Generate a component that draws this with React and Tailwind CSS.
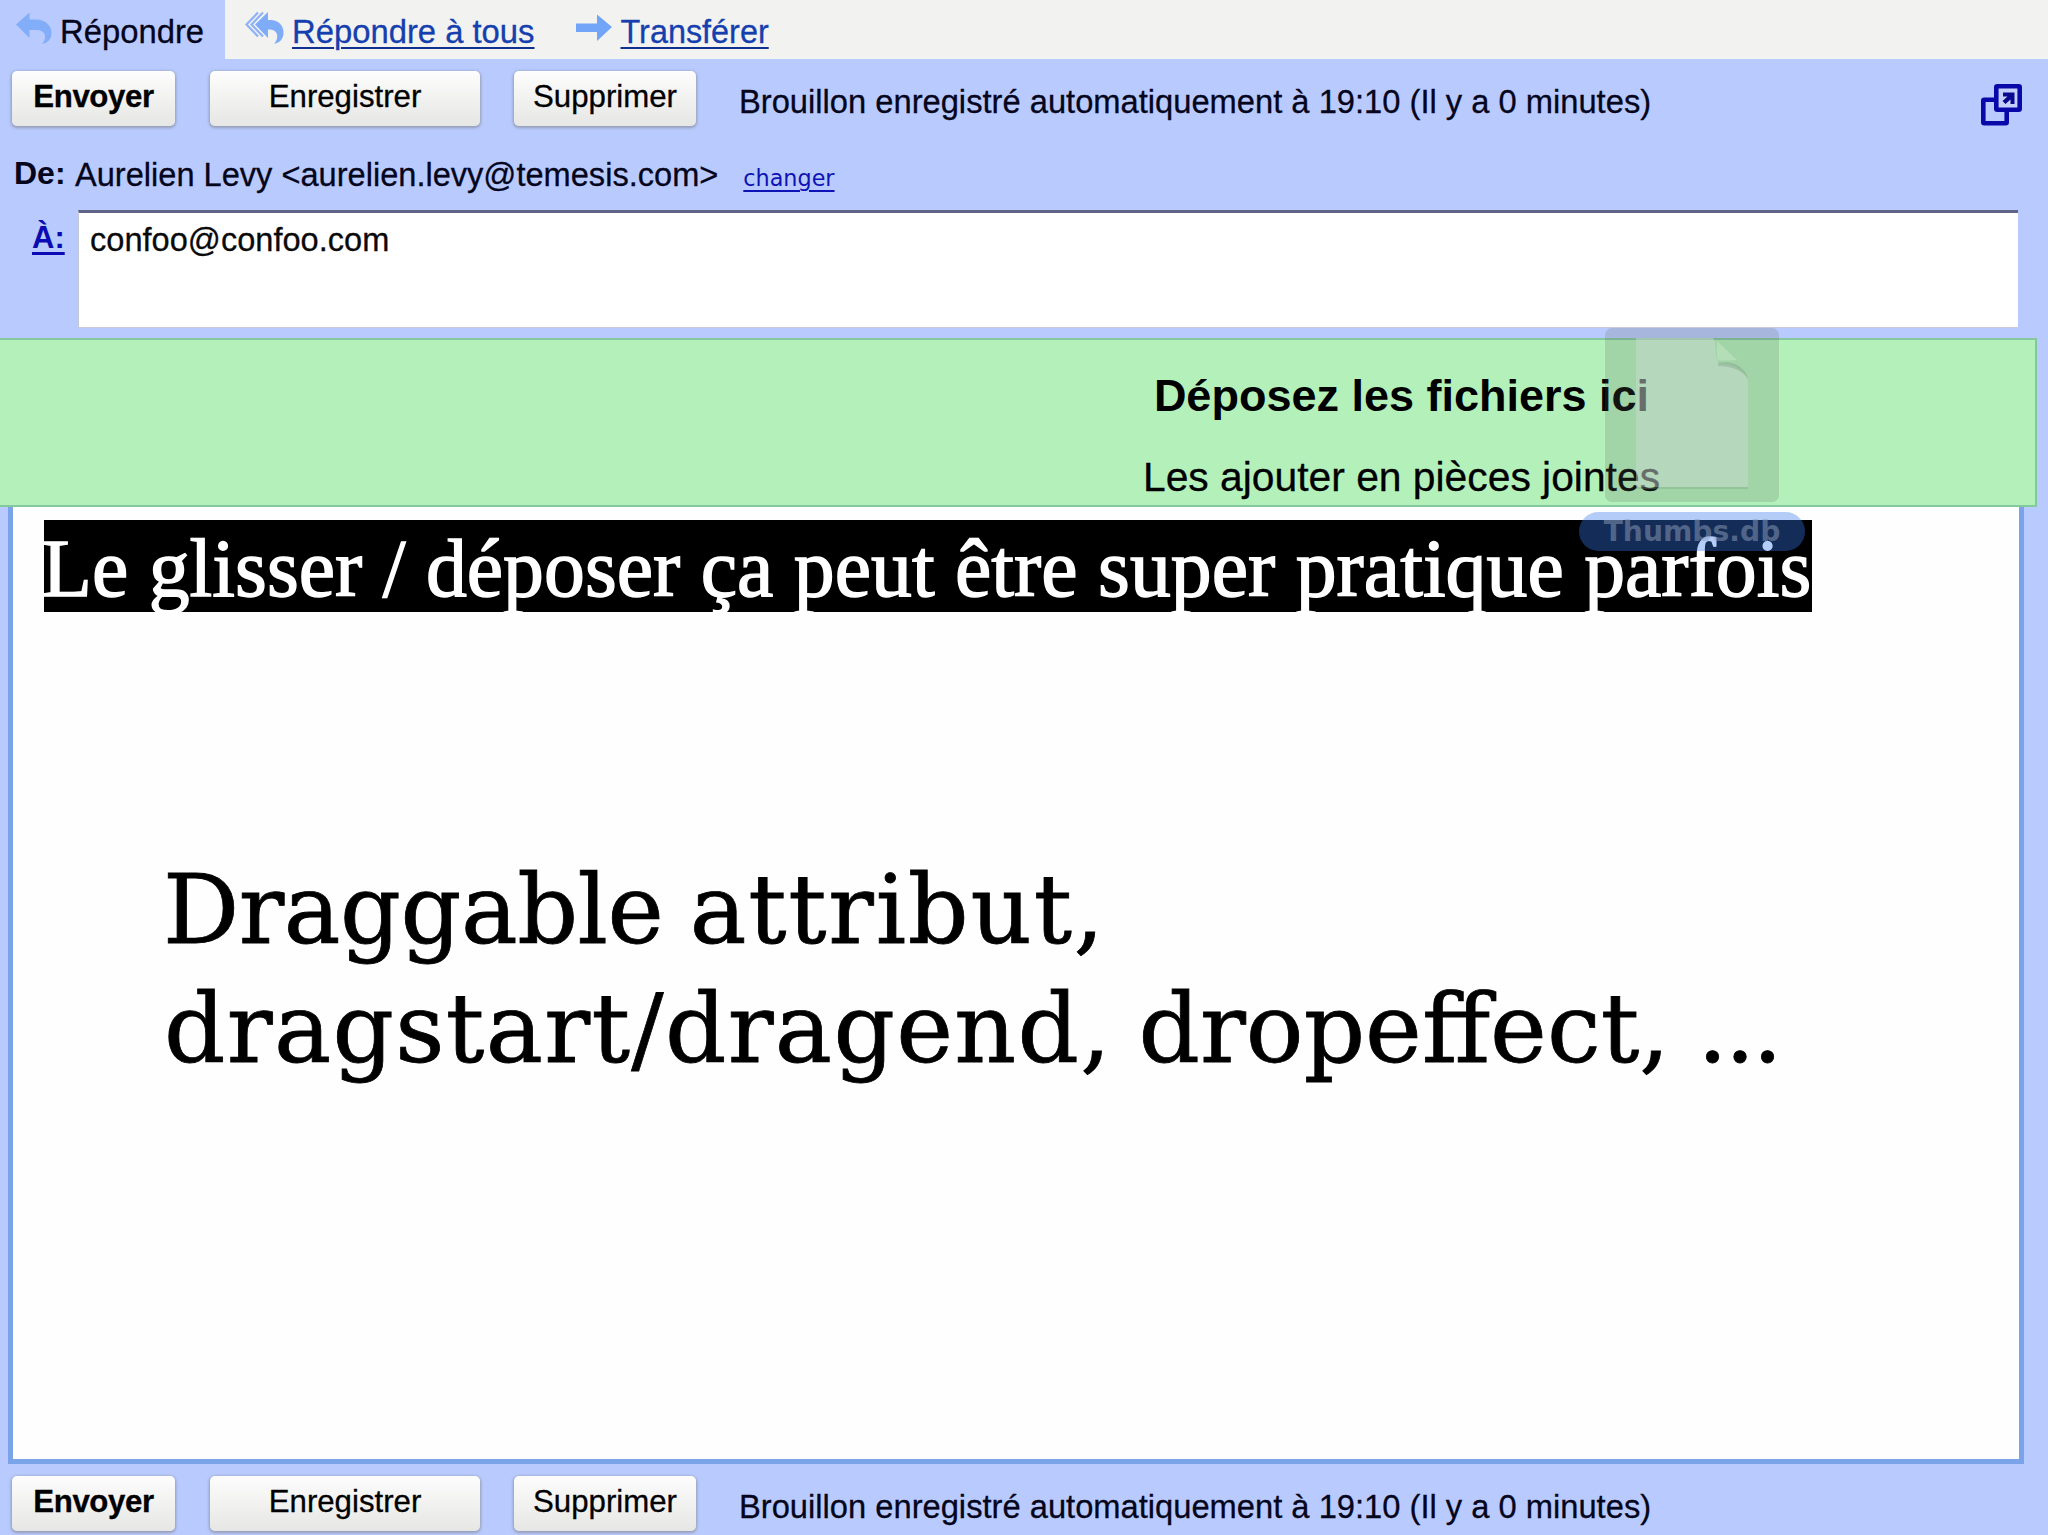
import React from "react";

const ink = "text-[#05051c]";

function ReplyIcon() {
  return (
    <svg className="block h-[34px] w-[38px]" viewBox="0 0 38 34">
      <path d="M1 13.5 14.5 1.5V8.5H21C31 8.5 36.500 15 36.500 22C36.500 28.500 32.500 32 27 33C32.500 27 31 19 21 19H14.500V27Z" fill="#82adf8" />
    </svg>
  );
}

function ReplyAllIcon() {
  return (
    <svg className="block h-[34px] w-[40px]" viewBox="0 0 40 34">
      <path d="M13 1.500 1.500 13.500 13 25.500M18 1.500 6.500 13.500 18 25.500" fill="none" stroke="#8fb2f6" strokeWidth="2.200" />
      <path d="M10 13.500 23 1V9H25C34 9 38.500 15 38.500 21.500C38.500 28 35 31.500 29 33C34.500 27 33 18.500 25 18.500H23V27Z" fill="#7eacf8" />
    </svg>
  );
}

function ForwardIcon() {
  return (
    <svg className="block h-[28px] w-[36px]" viewBox="0 0 36 28">
      <path d="M0 9.500H21V0.500L36 13 21 27V18H0Z" fill="#72a5f8" />
    </svg>
  );
}

function PopOutIcon() {
  return (
    <svg className="block h-[42px] w-[42px]" viewBox="0 0 42 42" fill="none" stroke="#0809a8" strokeWidth="4.600">
      <rect x="2.300" y="15.800" width="23.400" height="23.400" rx="1" />
      <rect x="15.300" y="2.300" width="23.400" height="23.400" rx="1" fill="#c4d0fb" />
      <path d="M22 8.500H33.500V20H29.500V15.500L24.500 20 21.500 17 26.500 12.500H22Z" fill="#0a0a90" stroke="none" />
    </svg>
  );
}

function ActionButton({ className, children }) {
  return (
    <button
      className={
        "h-[55px] rounded-[5px] bg-linear-to-b from-[#fdfdfd] to-[#e6e6e4] pb-[3px] text-[31.2px] leading-[52px] text-black shadow-[0_1px_3px_1px_rgba(125,125,135,0.6)] [-webkit-text-stroke:0.3px_currentColor] " +
        className
      }
    >
      {children}
    </button>
  );
}

function ActionBar({ children }) {
  return (
    <div className="flex h-[55px] items-start">
      <ActionButton className="ml-3 w-[163px] font-bold tracking-[-0.4px]">Envoyer</ActionButton>
      <ActionButton className="ml-[35px] w-[270px]">Enregistrer</ActionButton>
      <ActionButton className="ml-[34px] w-[182px]">Supprimer</ActionButton>
      <span className={"ml-[43px] text-[32.7px] leading-[61px] [-webkit-text-stroke:0.3px_currentColor] " + ink}>
        Brouillon enregistré automatiquement à 19:10 (Il y a 0 minutes)
      </span>
      {children}
    </div>
  );
}

function DragGhost() {
  return (
    <div className="pointer-events-none absolute top-[328px] left-[1579px] flex w-[226px] flex-col items-center">
      <div className="h-[174px] w-[174px] rounded-[7px] bg-[#58645a]/20">
        <svg className="block h-[174px] w-[174px]" viewBox="0 0 174 174">
          <path d="M31 10H108C113 17 108 34 116 36C128 35 139 41 143 53V159H31Z" fill="#cfdcd6" fillOpacity="0.45" />
          <path d="M112 13V30C113 33 116 33 132 32Z" fill="#c9eccd" fillOpacity="0.45" />
          <path d="M113 35C127 32 139 38 143 50C137 43 128 38 113 38Z" fill="#6f8f76" fillOpacity="0.3" />
          <path d="M31 160H143" stroke="#789a7c" strokeOpacity="0.4" strokeWidth="1.500" />
        </svg>
      </div>
      <div className="mt-[10px] h-[39px] w-[226px] rounded-full bg-[#367af0]/37 text-center font-['DejaVu_Sans',sans-serif] text-[28.200px] leading-[40px] font-bold text-[#8e9db8]/50">
        Thumbs.db
      </div>
    </div>
  );
}

export default function App() {
  return (
    <div className="relative h-[1535px] w-[2048px] overflow-hidden bg-[#b9cbfe] font-['Liberation_Sans',Arial,sans-serif] whitespace-nowrap">
      <nav className="flex h-[59px] bg-[#f2f2f1] text-[32.800px] leading-[64px] [-webkit-text-stroke:0.3px_currentColor]">
        <div className={"flex w-[225px] bg-[#b9cbfe] pl-[15px] " + ink}>
          <div className="pt-[11px]"><ReplyIcon /></div>
          <span className="ml-[7px]">Répondre</span>
        </div>
        <div className="flex pl-[20px] text-[#153fae]">
          <div className="pt-[11px]"><ReplyAllIcon /></div>
          <a className="ml-[7px] underline decoration-[#10308f] decoration-2 underline-offset-[4px]">Répondre à tous</a>
        </div>
        <div className="flex pl-[41px] text-[#153fae]">
          <div className="pt-[14px]"><ForwardIcon /></div>
          <a className="ml-[9px] text-[32.400px] underline decoration-[#10308f] decoration-2 underline-offset-[4px]">Transférer</a>
        </div>
      </nav>

      <div className="pt-3">
        <ActionBar>
          <div className="mr-[25px] ml-auto pt-[13px]"><PopOutIcon /></div>
        </ActionBar>
      </div>

      <div className={"flex h-[84px] items-baseline pt-[18px] leading-[62px] " + ink}>
        <b className="ml-[14px] w-[61px] -translate-y-[2px] text-[32px]">De:</b>
        <span className="text-[32.600px] [-webkit-text-stroke:0.3px_currentColor]">Aurelien Levy &lt;aurelien.levy@temesis.com&gt;</span>
        <a className="ml-[25px] font-['DejaVu_Sans',sans-serif] text-[22.300px] text-[#0f12b4] underline decoration-2 underline-offset-[4px]">changer</a>
      </div>

      <div className="flex h-[118px]">
        <a className="ml-[32px] w-[46px] text-[31px] leading-[55px] font-bold text-[#0b0bb4] underline decoration-[3px] underline-offset-[4px]">À:</a>
        <div className="w-[1940px] border-t-[3px] border-b border-l border-t-[#5d6485] border-b-[#c9c9da] border-l-[#c5c8d8] bg-white pl-[11px] text-[32.600px] leading-[53px] text-[#0a0a0a] [-webkit-text-stroke:0.3px_currentColor]">
          confoo@confoo.com
        </div>
      </div>

      <div className="mt-[10px] h-[169px] w-[2037px] border-2 border-l-0 border-[#84c99d] bg-[#b3f0ba] text-black">
        <div className="ml-[771px] w-[1261px] text-center">
          <p className="h-[86px] pt-[26px] text-[45px] leading-[60px] font-bold">Déposez les fichiers ici</p>
          <p className="text-[40.800px] leading-[102px] [-webkit-text-stroke:0.3px_currentColor]">Les ajouter en pièces jointes</p>
        </div>
      </div>

      <div className="ml-2 h-[957px] w-[2016px] border-[5px] border-t-0 border-[#7ba3ea] bg-[#fefefe] pt-[13px] pl-[31px]">
        <div className="h-[92px] w-[1768px] bg-black font-['Liberation_Serif','Times_New_Roman',serif] text-[81.800px] leading-[98px] text-white [-webkit-text-stroke:1.4px_currentColor]">
          <span className="-ml-[2px]">Le glisser / déposer ça peut être super pratique parfois</span>
        </div>
        <div className="mt-[239px] ml-[119px] font-['DejaVu_Serif',serif] leading-[119px] text-black [-webkit-text-stroke:0.8px_currentColor]">
          <p className="text-[95.200px]">
            <span className="tracking-[-0.5px]">Draggable</span> <span className="-ml-[4px] tracking-[1.800px]">attribut,</span>
          </p>
          <p className="ml-px text-[96px]">
            <span className="tracking-[1.300px]">dragstart/dragend,</span> <span className="-ml-[4px]">dropeffect,</span> <span className="-ml-[3px] tracking-[-3px]">...</span>
          </p>
        </div>
      </div>

      <div className="pt-[12px]">
        <ActionBar />
      </div>

      <DragGhost />
    </div>
  );
}
